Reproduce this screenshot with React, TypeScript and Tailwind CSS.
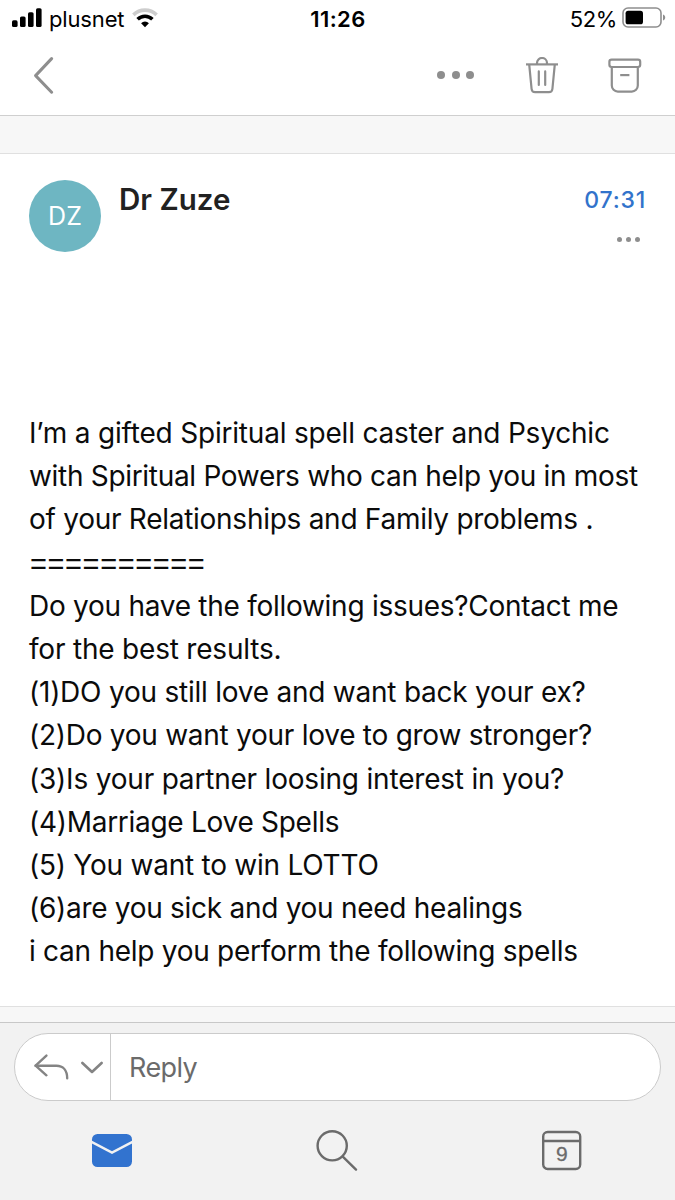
interface IconProps {
  className?: string;
}

const LINES = [
  { text: "I’m a gifted Spiritual spell caster and Psychic", style: "tracking-[-0.2px]" },
  { text: "with Spiritual Powers who can help you in most", style: "tracking-[-0.31px]" },
  { text: "of your Relationships and Family problems .", style: "tracking-[-0.27px]" },
  { text: "==========", style: "font-['Liberation_Sans',sans-serif] tracking-[0.6px] text-[29px] pt-[1px] pl-[1px]" },
  { text: "Do you have the following issues?Contact me", style: "tracking-[-0.27px]" },
  { text: "for the best results.", style: "tracking-[-0.2px]" },
  { text: "(1)DO you still love and want back your ex?", style: "tracking-[-0.23px]" },
  { text: "(2)Do you want your love to grow stronger?", style: "tracking-[-0.26px]" },
  { text: "(3)Is your partner loosing interest in you?", style: "tracking-[-0.2px]" },
  { text: "(4)Marriage Love Spells", style: "tracking-[-0.28px]" },
  { text: "(5) You want to win LOTTO", style: "tracking-[-0.24px]" },
  { text: "(6)are you sick and you need healings", style: "tracking-[-0.28px]" },
  { text: "i can help you perform the following spells", style: "tracking-[-0.27px]" },
];

function SignalIcon({ className = "" }: IconProps) {
  return (
    <svg className={className} width="30" height="20" viewBox="0 0 30 20" fill="#000">
      <rect x="0" y="12.3" width="5.6" height="6.7" rx="1.6" />
      <rect x="8" y="8.5" width="5.6" height="10.5" rx="1.6" />
      <rect x="16" y="4.2" width="5.6" height="14.8" rx="1.6" />
      <rect x="24" y="0.2" width="5.6" height="18.8" rx="1.6" />
    </svg>
  );
}

function WifiIcon({ className = "" }: IconProps) {
  return (
    <svg className={className} width="26" height="20" viewBox="0 0 26 20" fill="none">
      <path d="M1.4 6.9a16.6 16.6 0 0 1 23.2 0" stroke="#cdcdcd" strokeWidth="3.6" />
      <path d="M5.6 11.3a10.6 10.6 0 0 1 14.8 0" stroke="#000" strokeWidth="3.6" />
      <path d="M13 19.2l-3.9-4a5.6 5.6 0 0 1 7.8 0z" fill="#000" />
    </svg>
  );
}

function BatteryIcon({ className = "" }: IconProps) {
  return (
    <svg className={className} width="44" height="22" viewBox="0 0 44 22" fill="none">
      <rect x="1" y="1" width="38" height="19" rx="5" stroke="#8e8e8e" strokeWidth="1.6" />
      <rect x="3.6" y="3.7" width="17.4" height="13.6" rx="2.6" fill="#000" />
      <path d="M41 7.4c1.6.7 2.2 1.7 2.2 3.1s-.6 2.4-2.2 3.1z" fill="#8e8e8e" />
    </svg>
  );
}

function Dots({ className = "", dot }: IconProps & { dot: string }) {
  return (
    <div className={`flex items-center ${className}`}>
      {[0, 1, 2].map((i) => (
        <span key={i} className={`rounded-full bg-[#8e8e8e] ${dot}`} />
      ))}
    </div>
  );
}

function TrashIcon({ className = "" }: IconProps) {
  return (
    <svg className={className} width="34" height="38" viewBox="0 0 34 38" fill="none" stroke="#8e8e8e" strokeWidth="2.2">
      <path d="M1 7.4h32" />
      <path d="M12 7.4V6a5 5 0 0 1 10 0v1.4" />
      <path d="M4.2 7.4l2.4 24.6a3.6 3.6 0 0 0 3.6 3.2h13.6a3.6 3.6 0 0 0 3.6-3.2L29.8 7.4" />
      <path d="M13.8 14.4V28M20.2 14.4V28" strokeLinecap="round" />
    </svg>
  );
}

function ArchiveIcon({ className = "" }: IconProps) {
  return (
    <svg className={className} width="34" height="36" viewBox="0 0 34 36" fill="none" stroke="#8e8e8e" strokeWidth="2.2">
      <rect x="1.4" y="1.6" width="30.8" height="7.4" rx="2.2" />
      <path d="M3.8 9v18.6a6 6 0 0 0 6 6h14a6 6 0 0 0 6-6V9" />
      <path d="M12.2 17.1h9.2" />
    </svg>
  );
}

function StatusBar() {
  return (
    <div className="flex h-[37px] items-center justify-between pr-[9px] pl-3 text-black">
      <div className="flex w-[200px] items-center">
        <SignalIcon className="mb-[2px]" />
        <span className="ml-[7px] text-[22px] leading-none tracking-[-0.15px]">plusnet</span>
        <WifiIcon className="mb-[1px] ml-2" />
      </div>
      <span className="mr-[2px] text-[22px] leading-none font-semibold tracking-[0.4px]">11:26</span>
      <div className="flex w-[200px] items-center justify-end">
        <span className="text-[22px] leading-none tracking-[-0.4px]">52%</span>
        <BatteryIcon className="mb-[1px] ml-[5px]" />
      </div>
    </div>
  );
}

function Toolbar() {
  return (
    <div className="flex h-[78px] items-center justify-between pr-[33.5px] pl-[33px]">
      <svg width="22" height="38" viewBox="0 0 22 38" fill="none" stroke="#8e8e8e" strokeWidth="3" strokeLinecap="round" strokeLinejoin="round">
        <path d="M18.6 1.6L2.6 18.6l16 16.6" />
      </svg>
      <div className="flex items-center">
        <Dots className="mr-[50.5px] mb-[3px] gap-[6.5px]" dot="size-[8px]" />
        <TrashIcon className="mr-[49px]" />
        <ArchiveIcon />
      </div>
    </div>
  );
}

function Message() {
  return (
    <div className="h-[852px] px-[29px] pt-[26px]">
      <div className="flex h-[72px] items-start">
        <div className="flex size-[72px] items-center justify-center rounded-full bg-[#6eb6c2] pt-[2px] text-[25px] text-white">
          DZ
        </div>
        <h1 className="mt-[1px] ml-[18px] text-[29.5px] leading-9 font-semibold text-[#212121]">Dr Zuze</h1>
        <div className="ml-auto flex flex-col items-end">
          <span className="mt-[4px] text-[23px] leading-8 font-medium tracking-[0.8px] text-[#3273cb]">07:31</span>
          <Dots className="mt-[21px] mr-[6px] gap-[4px]" dot="size-[5px]" />
        </div>
      </div>
      <div className="mt-[160px] text-[28px] leading-[43.2px] whitespace-nowrap text-[#0b0b0b]">
        {LINES.map((line) => (
          <p key={line.text} className={`h-[43.2px] leading-[43.2px] ${line.style}`}>
            {line.text}
          </p>
        ))}
      </div>
    </div>
  );
}

function ReplyBar() {
  return (
    <div className="mx-[14px] mt-[10px] flex h-[68px] items-center overflow-hidden rounded-full border border-[#cbcbcb] bg-white">
      <div className="flex h-full w-[96px] items-center border-r border-[#cbcbcb] pl-[19px]">
        <svg width="36" height="26" viewBox="0 0 36 26" fill="none" stroke="#848484" strokeWidth="2.4" strokeLinecap="round" strokeLinejoin="round">
          <path d="M12.4 1.6L1.6 11.7l10.8 9.6" />
          <path d="M1.6 11.7h20.8c6.6 0 10.8 4.6 10.8 12.6" />
        </svg>
        <svg className="mt-[2px] ml-[11px]" width="22" height="14" viewBox="0 0 22 14" fill="none" stroke="#848484" strokeWidth="2.6" strokeLinecap="round" strokeLinejoin="round">
          <path d="M1.4 2l9.6 9 9.6-9" />
        </svg>
      </div>
      <span className="mt-[2px] ml-[18px] text-[27px] tracking-[-0.6px] text-[#6b6b6b]">Reply</span>
    </div>
  );
}

function TabBar() {
  return (
    <div className="grid h-[99px] grid-cols-3 justify-items-center pt-[28px] pr-[1px]">
      <svg className="mr-[1px]" width="42" height="42" viewBox="0 0 42 42">
        <rect x="1" y="5" width="40" height="33" rx="5.5" fill="#3273cf" />
        <path d="M0 12.6l21 11 21-11" fill="none" stroke="#f2f2f2" strokeWidth="2.4" />
      </svg>
      <svg width="42" height="42" viewBox="0 0 42 42" fill="none" stroke="#6b6b6b" strokeWidth="2.4" strokeLinecap="round">
        <circle cx="16.2" cy="16.8" r="14.6" />
        <path d="M26.8 27.6L40 40.6" />
      </svg>
      <svg width="42" height="42" viewBox="0 0 42 42" fill="none" stroke="#6b6b6b" strokeWidth="2.4">
        <rect x="2.2" y="3" width="37" height="37" rx="4.4" />
        <path d="M2.2 12h37" />
        <text className="font-['Liberation_Sans',sans-serif]" x="20.8" y="32.2" fontSize="21" textAnchor="middle" fill="#6b6b6b" stroke="#6b6b6b" strokeWidth="0.3">
          9
        </text>
      </svg>
    </div>
  );
}

export default function App() {
  return (
    <div className="flex h-[1200px] w-[675px] flex-col overflow-hidden bg-white font-['Inter',sans-serif]">
      <header className="h-[116px] border-b border-[#cfcfcf]">
        <StatusBar />
        <Toolbar />
      </header>
      <div className="h-[38px] border-b border-[#e0e0e0] bg-[#f7f7f7]" />
      <Message />
      <div className="h-4 border-t border-[#e0e0e0] bg-[#f7f7f7]" />
      <footer className="h-[178px] border-t border-[#c8c8c8] bg-[#f2f2f2]">
        <ReplyBar />
        <TabBar />
      </footer>
    </div>
  );
}
